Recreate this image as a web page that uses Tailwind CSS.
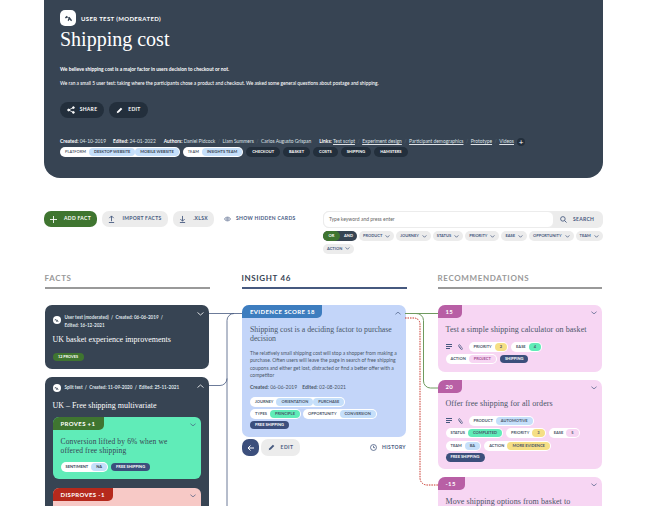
<!DOCTYPE html>
<html lang="en">
<head>
    <meta charset="UTF-8">
    <meta name="viewport" content="width=device-width, initial-scale=1.0">
    <title>Insight 46</title>
    <script src="https://cdn.jsdelivr.net/npm/@tailwindcss/browser@4"></script>
</head>
<body class="bg-white">
<div class="relative w-[667px] h-[506px] overflow-hidden font-['Lato',sans-serif]">

    <!-- hero -->
    <div class="mx-[44px] w-[559px] h-[178px] bg-[#374453] rounded-b-[16px] pl-[16px] pt-[10px] text-white">
        <div class="flex items-center gap-[5px] h-[16px]">
            <div class="w-[16px] h-[16px] rounded-[5px] bg-white flex items-center justify-center">
                <svg width="9" height="9" viewBox="0 0 10 10" fill="#374453"><path d="M1 4l2-2 2 2 1-1 3 4-1 1-2-2-1 2-1-1 1-2-1-1-2 1z"/></svg>
            </div>
            <span class="text-[6px] font-bold tracking-[0.06em]">USER TEST (MODERATED)</span>
        </div>
        <h1 class="font-['Liberation_Serif',serif] text-[20px] leading-[24px] mt-[1px]">Shipping cost</h1>
        <p class="text-[4.900px] font-bold leading-[7px] mt-[15px]">We believe shipping cost is a major factor in users decision to checkout or not.</p>
        <p class="text-[4.830px] leading-[7px] mt-[7px] font-medium">We ran a small 5 user test: taking where the participants chose a product and checkout. We asked some general questions about postage and shipping.</p>
        <div class="flex gap-[5px] mt-[15px]">
            <div class="w-[44px] h-[16px] rounded-full bg-[#232f3c] flex items-center justify-center gap-[5px] text-[5px] font-bold tracking-[0.06em]">
                <svg width="8" height="8" viewBox="0 0 10 10" fill="none" stroke="white"><path d="M2 5l6-3M2 5l6 3"/><circle cx="2" cy="5" r="1.2" fill="white"/><circle cx="8" cy="2" r="1.2" fill="white"/><circle cx="8" cy="8" r="1.2" fill="white"/></svg>
                SHARE
            </div>
            <div class="w-[39px] h-[16px] rounded-full bg-[#232f3c] flex items-center justify-center gap-[5px] text-[5px] font-bold tracking-[0.06em]">
                <svg width="7" height="7" viewBox="0 0 10 10" fill="white"><path d="M1 9l1-3 5-5 2 2-5 5z"/></svg>
                EDIT
            </div>
        </div>
        <div class="flex items-center mt-[20px] text-[4.900px] leading-[7px] h-[7px] whitespace-nowrap text-[#dfe3e8]">
            <span class="font-bold text-white">Created:&nbsp;</span>04-10-2019
            <span class="font-bold text-white ml-[7px]">Edited:&nbsp;</span>24-01-2022
            <span class="font-bold text-white ml-[8px]">Authors:&nbsp;</span>Daniel Pidcock
            <span class="mx-[2.500px] text-[#5d6a7a]">/</span><span>Liam Summers</span>
            <span class="mx-[2.500px] text-[#5d6a7a]">/</span><span>Carlos Augusto Grispan</span>
            <span class="font-bold text-white ml-[8px]">Links:&nbsp;</span><u>Test script</u>
            <span class="mx-[2.500px] text-[#5d6a7a]">/</span><u>Experiment design</u>
            <span class="mx-[2.500px] text-[#5d6a7a]">/</span><u>Participant demographics</u>
            <span class="mx-[2.500px] text-[#5d6a7a]">/</span><u>Prototype</u>
            <span class="mx-[2.500px] text-[#5d6a7a]">/</span><u>Videos</u>
            <span class="ml-[3px] w-[8px] h-[8px] rounded-full bg-[#232f3c] text-white text-[8px] leading-[8px] text-center">+</span>
        </div>
        <div class="flex items-center gap-[3px] mt-[2px] text-[4px] font-bold whitespace-nowrap">
            <div class="h-[10px] rounded-full bg-white flex items-center pl-[5px] pr-[1px] text-[#374453] font-medium">PLATFORM
                <span class="ml-[3px] h-[8px] px-[5px] rounded-full bg-[#c5dffa] flex items-center font-bold">DESKTOP WEBSITE</span>
                <span class="h-[8px] px-[5px] rounded-full bg-[#c5dffa] flex items-center font-bold">MOBILE WEBSITE</span>
            </div>
            <div class="h-[10px] rounded-full bg-white flex items-center pl-[5px] pr-[1px] text-[#374453] font-medium">TEAM
                <span class="ml-[3px] h-[8px] px-[5px] rounded-full bg-[#c5dffa] flex items-center font-bold">INSIGHTS TEAM</span>
            </div>
            <span class="h-[10px] px-[6px] rounded-full bg-[#232f3c] flex items-center">CHECKOUT</span>
            <span class="h-[10px] px-[6px] rounded-full bg-[#232f3c] flex items-center">BASKET</span>
            <span class="h-[10px] px-[6px] rounded-full bg-[#232f3c] flex items-center">COSTS</span>
            <span class="h-[10px] px-[6px] rounded-full bg-[#232f3c] flex items-center">SHIPPING</span>
            <span class="h-[10px] px-[6px] rounded-full bg-[#232f3c] flex items-center">HAMSTERS</span>
        </div>
    </div>

    <!-- toolbar -->
    <div class="flex justify-between ml-[44px] w-[559px] mt-[33px] h-[44px]">
        <div class="flex items-start gap-[5px] text-[5px] font-bold tracking-[0.06em] text-[#46597f]">
            <div class="w-[53px] h-[16px] rounded-[7px] bg-[#3f7530] text-white flex items-center justify-center gap-[7px]">
                <svg width="7" height="7" viewBox="0 0 8 8" stroke="white" stroke-width="1"><path d="M4 0v8M0 4h8"/></svg>
                ADD FACT
            </div>
            <div class="w-[66px] h-[16px] rounded-[7px] bg-[#ececec] flex items-center justify-center gap-[7px]">
                <svg width="7" height="8" viewBox="0 0 8 9" fill="none" stroke="#46597f"><path d="M4 7V1M1.500 3.500L4 1l2.500 2.500M1 8.500h6"/></svg>
                IMPORT FACTS
            </div>
            <div class="w-[41px] h-[16px] rounded-[7px] bg-[#ececec] flex items-center justify-center gap-[7px]">
                <svg width="7" height="8" viewBox="0 0 8 9" fill="none" stroke="#46597f"><path d="M4 1v6M1.500 4.500L4 7l2.500-2.500M1 8.500h6"/></svg>
                .XLSX
            </div>
            <div class="h-[16px] ml-[5px] flex items-center gap-[5px]">
                <svg width="7" height="6" viewBox="0 0 10 8" fill="none" stroke="#46597f"><path d="M.5 4C3 .5 7 .5 9.500 4 7 7.500 3 7.500.5 4z"/><circle cx="5" cy="4" r="1.300"/></svg>
                SHOW HIDDEN CARDS
            </div>
        </div>
        <div class="w-[280px]">
            <div class="h-[17px] rounded-[6px] bg-[#ececec] flex items-center">
                <div class="w-[231px] h-[17px] rounded-[6px] bg-white border border-[#ececec] pl-[5px] flex items-center text-[5px] text-[#666]">Type keyword and press enter</div>
                <svg class="ml-[6px]" width="7" height="7" viewBox="0 0 8 8" fill="none" stroke="#46597f" stroke-width="1"><circle cx="3.300" cy="3.300" r="2.600"/><path d="M5.200 5.200L7.500 7.500"/></svg>
                <span class="ml-[6px] text-[5px] font-bold tracking-[0.06em] text-[#46597f]">SEARCH</span>
            </div>
            <div class="flex flex-wrap gap-x-[2px] gap-y-[2.500px] mt-[3px] text-[4px] font-bold text-[#46597f] whitespace-nowrap">
                <div class="h-[10px] w-[34px] rounded-full bg-[#374453] flex items-center text-white">
                    <span class="w-[17px] h-[10px] rounded-full bg-[#3f7530] flex items-center justify-center">OR</span>
                    <span class="w-[17px] text-center">AND</span>
                </div>
                <div class="h-[10px] px-[4px] rounded-full bg-[#ececec] flex items-center gap-[3px]">PRODUCT <svg width="5" height="3" viewBox="0 0 6 4" fill="none" stroke="#46597f"><path d="M.5 .5L3 3 5.500 .5"/></svg></div>
                <div class="h-[10px] px-[4px] rounded-full bg-[#ececec] flex items-center gap-[3px]">JOURNEY <svg width="5" height="3" viewBox="0 0 6 4" fill="none" stroke="#46597f"><path d="M.5 .5L3 3 5.500 .5"/></svg></div>
                <div class="h-[10px] px-[4px] rounded-full bg-[#ececec] flex items-center gap-[3px]">STATUS <svg width="5" height="3" viewBox="0 0 6 4" fill="none" stroke="#46597f"><path d="M.5 .5L3 3 5.500 .5"/></svg></div>
                <div class="h-[10px] px-[4px] rounded-full bg-[#ececec] flex items-center gap-[3px]">PRIORITY <svg width="5" height="3" viewBox="0 0 6 4" fill="none" stroke="#46597f"><path d="M.5 .5L3 3 5.500 .5"/></svg></div>
                <div class="h-[10px] px-[4px] rounded-full bg-[#ececec] flex items-center gap-[3px]">EASE <svg width="5" height="3" viewBox="0 0 6 4" fill="none" stroke="#46597f"><path d="M.5 .5L3 3 5.500 .5"/></svg></div>
                <div class="h-[10px] px-[4px] rounded-full bg-[#ececec] flex items-center gap-[3px]">OPPORTUNITY <svg width="5" height="3" viewBox="0 0 6 4" fill="none" stroke="#46597f"><path d="M.5 .5L3 3 5.500 .5"/></svg></div>
                <div class="h-[10px] px-[4px] rounded-full bg-[#ececec] flex items-center gap-[3px]">TEAM <svg width="5" height="3" viewBox="0 0 6 4" fill="none" stroke="#46597f"><path d="M.5 .5L3 3 5.500 .5"/></svg></div>
                <div class="h-[10px] px-[4px] rounded-full bg-[#ececec] flex items-center gap-[3px]">ACTION <svg width="5" height="3" viewBox="0 0 6 4" fill="none" stroke="#46597f"><path d="M.5 .5L3 3 5.500 .5"/></svg></div>
            </div>
        </div>
    </div>

    <!-- columns -->
    <div class="grid grid-cols-[165px_165px_165px] gap-x-[32px] ml-[44.500px] mt-[18px]">
        <!-- facts -->
        <div>
            <div class="text-[8px] font-bold tracking-[0.08em] leading-[10px] text-[#999] pb-[4px] border-b-2 border-[#999]">FACTS</div>
            <div class="mt-[16px] w-[164px] h-[64px] rounded-[7px] bg-[#374453] text-white relative px-[8px] pt-[9px]">
                <svg class="absolute top-[7px] right-[5px]" width="7" height="4" viewBox="0 0 7 4" fill="none" stroke="white" stroke-width=".8"><path d="M.5 .5L3.500 3 6.500 .5"/></svg>
                <div class="flex gap-[4px]">
                    <div class="w-[8px] h-[8px] mt-[2px] rounded-full bg-white shrink-0 flex items-center justify-center">
                        <svg width="5" height="5" viewBox="0 0 10 10" fill="#374453"><path d="M1 4l2-2 2 2 1-1 3 4-1 1-2-2-1 2-1-1 1-2-1-1-2 1z"/></svg>
                    </div>
                    <div class="text-[4.600px] leading-[7.500px] font-bold text-[#dfe3e8] whitespace-nowrap">User test (moderated) &nbsp;/&nbsp; Created: 06-06-2019 &nbsp;/<br>Edited: 16-12-2021</div>
                </div>
                <div class="font-['Liberation_Serif',serif] text-[8px] leading-[10px] mt-[6px]">UK basket experience improvements</div>
                <div class="mt-[8px] w-[31px] h-[8px] rounded-full bg-[#3f7530] text-[3.800px] font-bold flex items-center justify-center">12 PROVES</div>
            </div>
            <div class="mt-[8px] w-[164px] h-[140px] rounded-t-[7px] bg-[#374453] text-white relative px-[8px] pt-[7px]">
                <svg class="absolute top-[7px] right-[5px]" width="7" height="4" viewBox="0 0 7 4" fill="none" stroke="white" stroke-width=".8"><path d="M.5 3.500L3.500 1 6.500 3.500"/></svg>
                <div class="flex gap-[4px] items-center">
                    <div class="w-[8px] h-[8px] rounded-full bg-white shrink-0 flex items-center justify-center">
                        <svg width="5" height="5" viewBox="0 0 10 10" fill="#374453"><path d="M1 4l2-2 2 2 1-1 3 4-1 1-2-2-1 2-1-1 1-2-1-1-2 1z"/></svg>
                    </div>
                    <div class="text-[4.600px] leading-[7.500px] font-bold text-[#dfe3e8] whitespace-nowrap">Split test &nbsp;/&nbsp; Created: 11-09-2020 &nbsp;/&nbsp; Edited: 25-11-2021</div>
                </div>
                <div class="font-['Liberation_Serif',serif] text-[8px] leading-[10px] mt-[9px]">UK – Free shipping multivariate</div>
                <div class="mt-[6px] h-[62px] rounded-[6px] bg-[#60ecb8] relative text-[#374453]">
                    <div class="w-[51px] h-[13px] rounded-tl-[6px] rounded-br-[5px] bg-[#3f7530] text-white text-[6px] font-bold tracking-[0.06em] flex items-center pl-[8px]">PROVES +1</div>
                    <svg class="absolute top-[6px] right-[5px]" width="6" height="4" viewBox="0 0 7 4" fill="none" stroke="#46597f" stroke-width=".8"><path d="M.5 .5L3.500 3 6.500 .5"/></svg>
                    <div class="font-['Liberation_Serif',serif] text-[7.500px] leading-[8.500px] px-[8px] mt-[8px] tracking-[0.02em]">Conversion lifted by 6% when we<br>offered free shipping</div>
                    <div class="flex gap-[3px] px-[8px] mt-[7px] text-[4px] font-bold whitespace-nowrap">
                        <div class="h-[10px] rounded-full bg-white flex items-center pl-[5px] pr-[1px]">SENTIMENT
                            <span class="ml-[3px] h-[8px] px-[5px] rounded-full bg-[#c5dffa] flex items-center">NA</span>
                        </div>
                        <span class="h-[8px] mt-[1px] px-[5px] rounded-full bg-[#3c4f7c] text-white flex items-center">FREE SHIPPING</span>
                    </div>
                </div>
                <div class="mt-[9px] h-[40px] rounded-t-[6px] bg-[#f7c9c6] relative">
                    <div class="w-[60px] h-[13px] rounded-tl-[6px] rounded-br-[5px] bg-[#b5291c] text-white text-[6px] font-bold tracking-[0.06em] flex items-center pl-[8px]">DISPROVES -1</div>
                    <svg class="absolute top-[6px] right-[5px]" width="6" height="4" viewBox="0 0 7 4" fill="none" stroke="#46597f" stroke-width=".8"><path d="M.5 .5L3.500 3 6.500 .5"/></svg>
                </div>
            </div>
        </div>

        <!-- insight -->
        <div>
            <div class="text-[8px] font-bold tracking-[0.08em] leading-[10px] text-[#374453] pb-[4px] border-b-2 border-[#46597f]">INSIGHT 46</div>
            <div class="mt-[16px] w-[164px] ml-[.5px] h-[132px] rounded-[7px] bg-[#c3d5f9] relative text-[#4a5568]">
                <div class="w-[80px] h-[13px] rounded-tl-[7px] rounded-br-[5px] bg-[#3d7dbf] text-white text-[6px] font-bold tracking-[0.06em] flex items-center pl-[8px]">EVIDENCE SCORE 18</div>
                <svg class="absolute top-[6px] right-[5px]" width="6" height="4" viewBox="0 0 7 4" fill="none" stroke="#46597f" stroke-width=".8"><path d="M.5 3.500L3.500 1 6.500 3.500"/></svg>
                <div class="font-['Liberation_Serif',serif] text-[7.800px] leading-[8.500px] pl-[8px] mt-[8px] whitespace-nowrap">Shipping cost is a deciding factor to purchase<br>decision</div>
                <p class="text-[5px] leading-[7.300px] px-[8px] mt-[7px]">The relatively small shipping cost will stop a shopper from making a purchase. Often users will leave the page in search of free shipping coupons and either get lost, distracted or find a better offer with a competitor</p>
                <div class="text-[5px] px-[8px] mt-[5px] leading-[7px] whitespace-nowrap"><b>Created:</b> 06-06-2019 &nbsp;&nbsp; <b>Edited:</b> 02-08-2021</div>
                <div class="px-[8px] mt-[6px] text-[4px] font-bold whitespace-nowrap flex flex-col items-start gap-[2px]">
                    <div class="h-[10px] rounded-full bg-white flex items-center pl-[5px] pr-[1px]">JOURNEY
                        <span class="ml-[3px] h-[8px] px-[5px] rounded-full bg-[#c5dffa] flex items-center">ORIENTATION</span>
                        <span class="h-[8px] px-[5px] rounded-full bg-[#c5dffa] flex items-center">PURCHASE</span>
                    </div>
                    <div class="flex gap-[2px]">
                        <div class="h-[10px] rounded-full bg-white flex items-center pl-[5px] pr-[1px]">TYPES
                            <span class="ml-[3px] h-[8px] px-[5px] rounded-full bg-[#60ecb8] flex items-center">PRINCIPLE</span>
                        </div>
                        <div class="h-[10px] rounded-full bg-white flex items-center pl-[5px] pr-[1px]">OPPORTUNITY
                            <span class="ml-[3px] h-[8px] px-[5px] rounded-full bg-[#c5dffa] flex items-center">CONVERSION</span>
                        </div>
                    </div>
                    <span class="h-[8px] px-[5px] rounded-full bg-[#3c4f7c] text-white flex items-center">FREE SHIPPING</span>
                </div>
            </div>
            <div class="flex items-center ml-[.5px] w-[164px] mt-[2px] text-[5px] font-bold tracking-[0.08em] text-[#46597f]">
                <div class="w-[17px] h-[17px] rounded-[7px] bg-[#3c4f7c] flex items-center justify-center">
                    <svg width="7" height="6" viewBox="0 0 7 6" fill="none" stroke="white"><path d="M7 3H1M3.500 .5L1 3l2.500 2.500"/></svg>
                </div>
                <div class="ml-[2px] w-[39px] h-[17px] rounded-[7px] bg-[#ececec] flex items-center justify-center gap-[6px]">
                    <svg width="7" height="7" viewBox="0 0 10 10" fill="#46597f"><path d="M1 9l1-3 5-5 2 2-5 5z"/></svg>
                    EDIT
                </div>
                <svg class="ml-auto" width="7" height="7" viewBox="0 0 8 8" fill="none" stroke="#46597f" stroke-width=".9"><circle cx="4" cy="4" r="3.400"/><path d="M4 2v2.200h1.800"/></svg>
                <span class="ml-[5px]">HISTORY</span>
            </div>
        </div>

        <!-- recommendations -->
        <div class="-ml-[1px]">
            <div class="text-[8px] font-bold tracking-[0.08em] leading-[10px] text-[#999] pb-[4px] border-b-2 border-[#999] w-[164px]">RECOMMENDATIONS</div>
            <div class="mt-[16px] w-[164px] h-[67px] rounded-[7px] bg-[#f7d6f3] relative text-[#4a5568]">
                <div class="w-[24px] h-[13px] rounded-tl-[7px] rounded-br-[5px] bg-[#b85fa5] text-white text-[6px] font-bold tracking-[0.06em] flex items-center pl-[8px]">15</div>
                <svg class="absolute top-[6px] right-[5px]" width="6" height="4" viewBox="0 0 7 4" fill="none" stroke="#46597f" stroke-width=".8"><path d="M.5 .5L3.500 3 6.500 .5"/></svg>
                <div class="font-['Liberation_Serif',serif] text-[8px] leading-[10px] px-[8px] mt-[7px] tracking-[0.01em]">Test a simple shipping calculator on basket</div>
                <div class="px-[8px] mt-[7px] flex flex-wrap gap-x-[3px] gap-y-[2px] text-[4px] font-bold whitespace-nowrap items-center">
                    <svg class="mr-[3px]" width="6" height="6" viewBox="0 0 6 6" fill="#46597f"><path d="M0 0h6v1H0zM0 2h6v1H0zM0 4h4v1H0z"/></svg>
                    <svg class="mr-[3px]" width="5" height="6" viewBox="0 0 5 6" fill="none" stroke="#46597f" stroke-width=".7"><path d="M1 2.500l2 2.800a.8.8 0 0 0 1.300-1L2 1a.8.8 0 0 0-1.300 1L3 5"/></svg>
                    <div class="h-[10px] rounded-full bg-white flex items-center pl-[5px] pr-[1px]">PRIORITY
                        <span class="ml-[3px] h-[8px] px-[5px] rounded-full bg-[#f5df85] flex items-center">2</span>
                    </div>
                    <div class="h-[10px] rounded-full bg-white flex items-center pl-[5px] pr-[1px]">EASE
                        <span class="ml-[3px] h-[8px] px-[5px] rounded-full bg-[#60ecb8] flex items-center">4</span>
                    </div>
                    <div class="h-[10px] rounded-full bg-white flex items-center pl-[5px] pr-[1px]">ACTION
                        <span class="ml-[3px] h-[8px] px-[5px] rounded-full bg-[#f7d6f3] text-[#a34f92] flex items-center">PROJECT</span>
                    </div>
                    <span class="h-[8px] px-[5px] rounded-full bg-[#3c4f7c] text-white flex items-center">SHIPPING</span>
                </div>
            </div>
            <div class="mt-[8px] w-[164px] h-[89px] rounded-[7px] bg-[#f7d6f3] relative text-[#4a5568]">
                <div class="w-[24px] h-[13px] rounded-tl-[7px] rounded-br-[5px] bg-[#b85fa5] text-white text-[6px] font-bold tracking-[0.06em] flex items-center pl-[8px]">20</div>
                <svg class="absolute top-[6px] right-[5px]" width="6" height="4" viewBox="0 0 7 4" fill="none" stroke="#46597f" stroke-width=".8"><path d="M.5 .5L3.500 3 6.500 .5"/></svg>
                <div class="font-['Liberation_Serif',serif] text-[8px] leading-[10px] px-[8px] mt-[6px] tracking-[0.01em]">Offer free shipping for all orders</div>
                <div class="px-[8px] mt-[7px] flex flex-wrap gap-x-[3px] gap-y-[1.150px] text-[4px] font-bold whitespace-nowrap items-center">
                    <svg class="mr-[3px]" width="6" height="6" viewBox="0 0 6 6" fill="#46597f"><path d="M0 0h6v1H0zM0 2h6v1H0zM0 4h4v1H0z"/></svg>
                    <svg class="mr-[3px]" width="5" height="6" viewBox="0 0 5 6" fill="none" stroke="#46597f" stroke-width=".7"><path d="M1 2.500l2 2.800a.8.8 0 0 0 1.300-1L2 1a.8.8 0 0 0-1.300 1L3 5"/></svg>
                    <div class="h-[10px] rounded-full bg-white flex items-center pl-[5px] pr-[1px]">PRODUCT
                        <span class="ml-[3px] h-[8px] px-[5px] rounded-full bg-[#c5dffa] flex items-center">AUTOMOTIVE</span>
                    </div>
                    <div class="basis-full h-0"></div>
                    <div class="h-[10px] rounded-full bg-white flex items-center pl-[5px] pr-[1px]">STATUS
                        <span class="ml-[3px] h-[8px] px-[5px] rounded-full bg-[#60ecb8] flex items-center">COMPLETED</span>
                    </div>
                    <div class="h-[10px] rounded-full bg-white flex items-center pl-[5px] pr-[1px]">PRIORITY
                        <span class="ml-[3px] h-[8px] px-[5px] rounded-full bg-[#f5df85] flex items-center">3</span>
                    </div>
                    <div class="h-[10px] rounded-full bg-white flex items-center pl-[5px] pr-[1px]">EASE
                        <span class="ml-[3px] h-[8px] px-[5px] rounded-full bg-[#f7d6f3] flex items-center">5</span>
                    </div>
                    <div class="basis-full h-0"></div>
                    <div class="h-[10px] rounded-full bg-white flex items-center pl-[5px] pr-[1px]">TEAM
                        <span class="ml-[3px] h-[8px] px-[5px] rounded-full bg-[#c5dffa] flex items-center">BA</span>
                    </div>
                    <div class="h-[10px] rounded-full bg-white flex items-center pl-[5px] pr-[1px]">ACTION
                        <span class="ml-[3px] h-[8px] px-[5px] rounded-full bg-[#f5df85] flex items-center">MORE EVIDENCE</span>
                    </div>
                    <div class="basis-full h-0"></div>
                    <span class="h-[9px] px-[5px] rounded-full bg-[#3c4f7c] text-white flex items-center">FREE SHIPPING</span>
                </div>
            </div>
            <div class="mt-[8px] w-[164px] h-[60px] rounded-t-[7px] bg-[#f7d6f3] relative text-[#4a5568]">
                <div class="w-[27px] h-[13px] rounded-tl-[7px] rounded-br-[5px] bg-[#b85fa5] text-white text-[6px] font-bold tracking-[0.06em] flex items-center pl-[8px]">-15</div>
                <svg class="absolute top-[6px] right-[5px]" width="6" height="4" viewBox="0 0 7 4" fill="none" stroke="#46597f" stroke-width=".8"><path d="M.5 .5L3.500 3 6.500 .5"/></svg>
                <div class="font-['Liberation_Serif',serif] text-[8px] leading-[10px] px-[8px] mt-[7px] tracking-[0.01em]">Move shipping options from basket to</div>
            </div>
        </div>
    </div>

    <!-- connectors between the columns -->
    <svg class="absolute inset-0 pointer-events-none" width="667" height="506" viewBox="0 0 667 506" fill="none">
        <path d="M209 313.500H242M234 313.500a7 7 0 0 0-7 7V506M209 385.500H220a7 7 0 0 0 7-7" stroke="#46597f" stroke-width=".8"/>
        <path d="M405 313.500H438M416 313.500a7 7 0 0 1 7.500 7V381a7 7 0 0 0 7 7H438" stroke="#6f9a5f" stroke-width="1"/>
        <path d="M405 318h9a6 6 0 0 1 6 6V478a7 7 0 0 0 7 7h11" stroke="#c8342a" stroke-width="1" stroke-dasharray="1.500 1"/>
    </svg>
</div>
</body>
</html>
